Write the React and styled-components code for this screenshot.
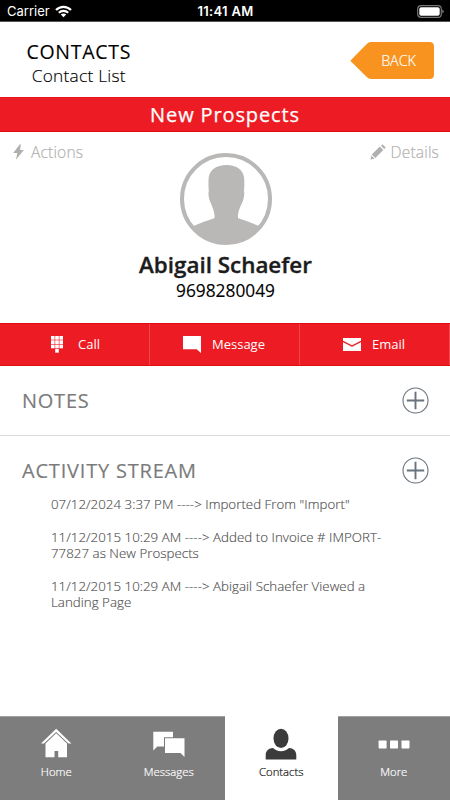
import React from 'react';
import styled, { createGlobalStyle } from 'styled-components';

const GlobalStyle = createGlobalStyle`
  * {
    box-sizing: border-box;
  }

  body {
    margin: 0;
    background: #fff;
    font-family: 'Open Sans', sans-serif;
  }
`;

const Screen = styled.div`
  display: flex;
  flex-direction: column;
  width: 450px;
  height: 800px;
  overflow: hidden;
  background: #fff;

  svg {
    display: block;
    flex-shrink: 0;
  }
`;

const Label = styled.span`
  font-size: ${({ $size }) => $size}px;
  font-weight: ${({ $weight }) => $weight || 400};
  letter-spacing: ${({ $spacing }) => $spacing || 0}px;
  line-height: ${({ $line }) => $line || 24}px;
  color: ${({ $color }) => $color || 'inherit'};
  -webkit-text-stroke: ${({ $stroke }) => $stroke || 0}px currentColor;
  white-space: nowrap;
`;

const StatusBar = styled.div`
  display: grid;
  grid-template-columns: 1fr auto 1fr;
  align-items: center;
  height: 22px;
  padding: 1px 6px 0 7px;
  background: #000;
  border-bottom: 1px solid #555;
  color: #fff;
  font-family: Inter, sans-serif;
`;

const Carrier = styled.div`
  display: flex;
  align-items: center;
  gap: 5px;
`;

const Battery = styled.div`
  justify-self: end;
`;

const Header = styled.header`
  display: flex;
  justify-content: space-between;
  height: 75px;
  padding: 18px 16px 0 26.5px;
`;

const Heading = styled.div`
  display: flex;
  flex-direction: column;
  align-items: center;
  color: #000;
`;

const BackButton = styled.button`
  display: grid;
  width: 84px;
  height: 37px;
  margin-top: 2px;
  padding: 0;
  border: 0;
  background: none;
  color: #fff;
  font-family: inherit;

  > * {
    grid-area: 1 / 1;
  }

  > span {
    align-self: center;
    padding-left: 13px;
  }
`;

const Banner = styled.div`
  display: flex;
  align-items: center;
  justify-content: center;
  height: 35px;
  border-top: 1px solid #e8141a;
  border-bottom: 1px solid #e00c10;
  background: #ed1c24;
  color: #fff;
`;

const Profile = styled.section`
  display: grid;
  grid-template-columns: 1fr auto 1fr;
  align-items: start;
  height: 191px;
  padding: 7px 11px 0 12px;
`;

const Link = styled.div`
  display: flex;
  align-items: center;
  justify-self: ${({ $end }) => ($end ? 'end' : 'start')};
  gap: ${({ $end }) => ($end ? 5 : 6)}px;
  height: 25px;
  color: #b3b2b1;
`;

const Person = styled.div`
  display: flex;
  flex-direction: column;
  align-items: center;
  padding-top: 14px;
  color: #1c1c1c;
`;

const Actions = styled.div`
  display: grid;
  grid-template-columns: repeat(3, 150px);
  height: 43px;
  border-top: 1px solid #e00c10;
  border-bottom: 1px solid #e00c10;
  background: #ed1c24;
`;

const Action = styled.div`
  display: flex;
  align-items: center;
  gap: ${({ $gap }) => $gap}px;
  padding: 0 0 1px ${({ $pad }) => $pad}px;
  border-right: 1px solid #f3474e;
  color: #fff;
`;

const Panel = styled.section`
  border-bottom: ${({ $line }) => ($line ? '1px solid #d9d9d9' : '0')};
`;

const PanelHead = styled.div`
  display: flex;
  align-items: center;
  justify-content: space-between;
  height: 69px;
  padding: 0 21px 0 22px;
  color: #7b7b7b;
`;

const Stream = styled.ul`
  display: flex;
  flex-direction: column;
  gap: 16.4px;
  margin: 0;
  padding: 0 60px 0 51px;
  list-style: none;
`;

const Entry = styled.li`
  margin-top: ${({ $first }) => ($first ? -9 : 0)}px;
  font-size: 13.3px;
  line-height: 16.3px;
  letter-spacing: 0.03px;
  color: #505050;
  font-weight: 300;
  -webkit-text-stroke: 0.15px #505050;
  white-space: pre;
`;

const TabBar = styled.nav`
  display: grid;
  grid-template-columns: 112.5px 112.5px 112.5px 112.5px;
  height: 84px;
  margin-top: auto;
`;

const Tab = styled.div`
  display: flex;
  flex-direction: column;
  align-items: center;
  padding-top: 11px;
  border-top: 1px solid ${({ $active }) => ($active ? '#fff' : '#a0a0a0')};
  background: ${({ $active }) => ($active ? '#fff' : '#7d7d7d')};
  color: ${({ $active }) => ($active ? '#111' : '#fff')};
`;

const WifiIcon = () => (
  <svg width="17" height="13" viewBox="0 0 17 13" fill="none" stroke="#fff" strokeWidth="2.2">
    <path d="M1 5C5.2 .7 11.8 .7 16 5" />
    <path d="M3.8 7.8C6.5 5.2 10.5 5.2 13.2 7.8" />
    <path d="M8.5 12.3 5.8 9.5Q8.5 7.4 11.2 9.5Z" fill="#fff" stroke="none" />
  </svg>
);

const BatteryIcon = () => (
  <svg width="27" height="13" viewBox="0 0 27 13">
    <rect x=".7" y=".7" width="23.6" height="11.6" rx="3.4" fill="none" stroke="#777" strokeWidth="1.2" />
    <rect x="2.3" y="2.3" width="20.4" height="8.4" rx="1.8" fill="#fff" />
    <path d="M25.4 4.6q1.3.6 1.3 1.9t-1.3 1.9z" fill="#888" />
  </svg>
);

const BackShape = () => (
  <svg width="84" height="37" viewBox="0 0 84 37">
    <path d="M.3 18.8 17 1.7Q18.7 0 21 0H79.5Q84 0 84 4.5v28Q84 37 79.5 37H21q-2.3 0-4-1.7Z" fill="#f7931e" />
  </svg>
);

const BoltIcon = () => (
  <svg width="13" height="16" viewBox="0 0 13 16" fill="#b0afae">
    <path d="M7.9.2 1.2 9H5.3L4 15.700 11.800 6.100H8L8.900.6Z" />
  </svg>
);

const PencilIcon = () => (
  <svg width="16" height="16" viewBox="0 0 16 16" fill="#b0afae">
    <path d="m9.800 2.600 3.500 3.500-8 8-3.500-3.500ZM11 1.700 12.500.3l3.200 3.200-1.500 1.400ZM1.300 11.500l3.200 3.200L.5 15.600Z" />
  </svg>
);

const Avatar = () => (
  <svg width="92" height="92" viewBox="0 0 92 92">
    <circle cx="46" cy="46" r="44" fill="#fff" stroke="#b9b8b7" strokeWidth="4" />
    <path
      d="M46.500 12C36.500 12 28.500 17 28.500 27v7.500c0 1.500.4 2.500.3 3.500-.5 2-.4 4.500.2 7 .9 4 2.500 6 3.500 9.500 1.400 3.500 2.600 7.500 1.800 10.800Q24 68.500 13.500 73 24.500 90 46 90T78.700 73Q69 68.500 58.200 65.300c-.8-3.300.4-7.300 1.800-10.800 1.300-3.500 2.900-5.500 3.700-9.500.6-2.500.8-5 .3-7-.2-1 .3-2 .3-3.500V27C64.300 17 56.500 12 46.500 12Z"
      fill="#b9b8b7"
    />
  </svg>
);

const KeypadIcon = () => (
  <svg width="12" height="17" viewBox="0 0 12 17" fill="#fff">
    {[0, 4.3, 8.6].map((y) =>
      [0, 4.2, 8.4].map((x) => <rect key={`${x}-${y}`} x={x} y={y} width="3.6" height="3.7" />)
    )}
    <rect x="4.2" y="13" width="3.6" height="3.7" />
  </svg>
);

const BubbleIcon = () => (
  <svg width="18" height="17" viewBox="0 0 18 17" fill="#fff">
    <path d="M0 0H18V17L13.7 13.2H0Z" />
  </svg>
);

const MailIcon = () => (
  <svg width="18" height="13" viewBox="0 0 18 13" fill="#fff">
    <path d="M0 0H18V2.8L9 7.300 0 2.800ZM0 4.200 9 8.700 18 4.200V13H0Z" />
  </svg>
);

const PlusIcon = () => (
  <svg width="27" height="27" viewBox="0 0 27 27" fill="none" stroke="#69737d">
    <circle cx="13.5" cy="13.5" r="12.5" strokeWidth="1.1" />
    <path d="M4.8 13.5H22.2M13.5 4.8V22.2" strokeWidth="1.9" />
  </svg>
);

const HomeIcon = () => (
  <svg width="32" height="32" viewBox="0 0 32 32" fill="#fff">
    <path d="M16.200.8 31.400 15.500H28.500L16.200 3.900 3.900 15.500H1Z" />
    <path d="M16.200 5.200 27 15.500V29.300H18.200V23H14.500V29.300H5.500V15.500Z" />
  </svg>
);

const MessagesIcon = () => (
  <svg width="32" height="32" viewBox="0 0 32 32" fill="#fff">
    <path d="M.3 3.8H20V9.3H11V18.6H4.3L.3 22.5Z" />
    <path d="M12 10.3H31.5V29L27.5 25H12Z" />
  </svg>
);

const ContactIcon = () => (
  <svg width="32" height="32" viewBox="0 0 32 32" fill="#3b3b3b">
    <ellipse cx="16" cy="10.4" rx="7.5" ry="9.7" />
    <path d="M.7 31.500V27c0-4 3-6.800 7.300-7 2 2 4.500 3.200 8 3.200s6-1.200 8-3.200c4.300.2 7.300 3 7.300 7v4.500Z" />
  </svg>
);

const MoreIcon = () => (
  <svg width="32" height="32" viewBox="0 0 32 32" fill="#fff">
    <rect x=".6" y="12.5" width="8" height="8" rx=".7" />
    <rect x="12" y="12.5" width="8" height="8" rx=".7" />
    <rect x="23.5" y="12.5" width="8" height="8" rx=".7" />
  </svg>
);

const entries = [
  '07/12/2024 3:37 PM ----> Imported From "Import"',
  '11/12/2015 10:29 AM ----> Added to Invoice # IMPORT-\n77827 as New Prospects',
  '11/12/2015 10:29 AM ----> Abigail Schaefer Viewed a\nLanding Page',
];

const tabs = [
  { name: 'Home', icon: <HomeIcon /> },
  { name: 'Messages', icon: <MessagesIcon /> },
  { name: 'Contacts', icon: <ContactIcon />, active: true },
  { name: 'More', icon: <MoreIcon /> },
];

const App = () => {
  return (
    <Screen>
      <GlobalStyle />
      <StatusBar>
        <Carrier>
          <Label $size={13} $line={20}>Carrier</Label>
          <WifiIcon />
        </Carrier>
        <Label $size={13} $weight={600} $spacing={0.3} $line={20}>11:41 AM</Label>
        <Battery>
          <BatteryIcon />
        </Battery>
      </StatusBar>

      <Header>
        <Heading>
          <Label $size={19.5} $weight={500} $spacing={0.7} $stroke={0.12}>CONTACTS</Label>
          <Label $size={17.3} $weight={300} $spacing={0.25} $stroke={0.15}>Contact List</Label>
        </Heading>
        <BackButton>
          <BackShape />
          <Label $size={14.3} $weight={300} $stroke={0.2}>BACK</Label>
        </BackButton>
      </Header>

      <Banner>
        <Label $size={20} $weight={500} $spacing={0.87} $stroke={0.25}>New Prospects</Label>
      </Banner>

      <Profile>
        <Link>
          <BoltIcon />
          <Label $size={15.6} $weight={300} $spacing={0.15} $stroke={0.2}>Actions</Label>
        </Link>
        <Person>
          <Avatar />
          <Label $size={22.4} $weight={600} $line={39} $stroke={0.35}>Abigail Schaefer</Label>
          <Label $size={17.3} $weight={500} $line={14} $color="#000" $stroke={0.12}>9698280049</Label>
        </Person>
        <Link $end>
          <PencilIcon />
          <Label $size={15.6} $weight={300} $spacing={0.15} $stroke={0.2}>Details</Label>
        </Link>
      </Profile>

      <Actions>
        <Action $pad={51} $gap={15}>
          <KeypadIcon />
          <Label $size={13}>Call</Label>
        </Action>
        <Action $pad={33} $gap={11}>
          <BubbleIcon />
          <Label $size={13}>Message</Label>
        </Action>
        <Action $pad={43} $gap={11}>
          <MailIcon />
          <Label $size={13}>Email</Label>
        </Action>
      </Actions>

      <Panel $line>
        <PanelHead>
          <Label $size={20} $weight={500} $spacing={0.75} $stroke={0.15}>NOTES</Label>
          <PlusIcon />
        </PanelHead>
      </Panel>

      <Panel>
        <PanelHead>
          <Label $size={20} $weight={500} $spacing={0.8} $stroke={0.15}>ACTIVITY STREAM</Label>
          <PlusIcon />
        </PanelHead>
        <Stream>
          {entries.map((entry, index) => (
            <Entry key={entry} $first={index === 0}>{entry}</Entry>
          ))}
        </Stream>
      </Panel>

      <TabBar>
        {tabs.map(({ name, icon, active }) => (
          <Tab key={name} $active={active}>
            {icon}
            <Label $size={11.3} $weight={300} $line={24} $stroke={0.2}>{name}</Label>
          </Tab>
        ))}
      </TabBar>
    </Screen>
  );
};

export default App;
